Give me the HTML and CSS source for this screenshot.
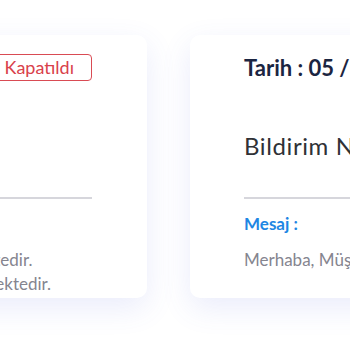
FILE: index.html
```html
<!DOCTYPE html>
<html lang="tr">
<head>
<meta charset="utf-8">
<link rel="stylesheet" href="styles.css">
</head>
<body>
<div class="row">
  <div class="card">
    <div class="head">
      <span class="date">Tarih : 04 / 05</span>
      <span class="badge">Kapatıldı</span>
    </div>
    <div class="title">Bildirim No</div>
    <div class="divider"></div>
    <div class="label">Mesaj :</div>
    <p class="msg">Talebiniz incelenmektedir.<br>Destek ekibi ilgilenmektedir.</p>
  </div>
  <div class="card">
    <div class="head">
      <span class="date">Tarih : 05 / 05 / 2023</span>
      <span class="badge">Kapatıldı</span>
    </div>
    <div class="title">Bildirim No: 10246</div>
    <div class="divider"></div>
    <div class="label">Mesaj :</div>
    <p class="msg">Merhaba, Müşteri talebiniz alınmıştır.</p>
  </div>
</div>
</body>
</html>
```
FILE: styles.css
```css
html, body {
  margin: 0;
  padding: 0;
  background: #ffffff;
  overflow: hidden;
}
body {
  font-family: Lato, "Noto Sans", sans-serif;
  width: 350px;
  height: 350px;
}
.row {
  display: flex;
  gap: 43px;
  margin-left: -213px;
  padding-top: 35px;
}
.card {
  flex: 0 0 360px;
  min-width: 0;
  height: 263px;
  box-sizing: border-box;
  background: #fff;
  border-radius: 10px;
  box-shadow: 0 10px 30px rgba(80, 100, 220, 0.12);
  padding: 19px 55px 0 54px;
  overflow: hidden;
}
.head {
  display: flex;
  justify-content: space-between;
  align-items: center;
  height: 27px;
}
.date {
  font-weight: 700;
  font-size: 22px;
  color: #1b2541;
  white-space: nowrap;
}
.badge {
  box-sizing: border-box;
  height: 27px;
  border: 1px solid #d94b54;
  border-radius: 4px;
  color: #d9414b;
  font-size: 18px;
  line-height: 25px;
  padding: 0 17px;
  white-space: nowrap;
}
.title {
  margin-top: 51px;
  font-size: 24px;
  letter-spacing: 0.6px;
  line-height: 28px;
  color: #2f3136;
  white-space: nowrap;
}
.divider {
  margin-top: 37px;
  height: 2px;
  background: #d6d6dc;
}
.label {
  margin-top: 14px;
  font-weight: 700;
  font-size: 17px;
  line-height: 22px;
  color: #1e86e3;
}
.msg {
  margin: 13px 0 0;
  font-size: 17px;
  line-height: 24px;
  color: #85858f;
  white-space: nowrap;
}
```
